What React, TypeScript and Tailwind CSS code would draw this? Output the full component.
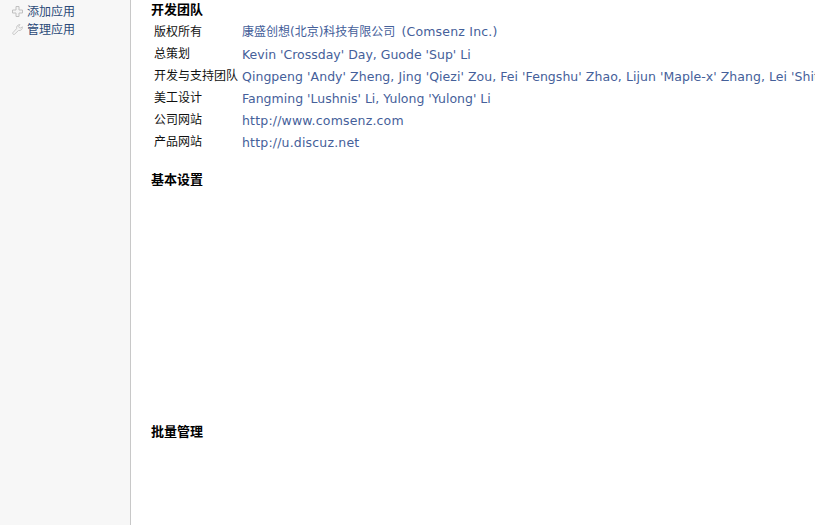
const cjk = "font-['Noto_Sans_CJK_SC',sans-serif]";
const latin = "font-['DejaVu_Sans','Noto_Sans_CJK_SC',sans-serif]";

const rows: { label: string; value: string; tracking?: string }[] = [
  { label: "总策划", value: "Kevin 'Crossday' Day, Guode 'Sup' Li" },
  {
    label: "开发与支持团队",
    value:
      "Qingpeng 'Andy' Zheng, Jing 'Qiezi' Zou, Fei 'Fengshu' Zhao, Lijun 'Maple-x' Zhang, Lei 'Shitou' Cao",
    tracking: "tracking-[0.05px]",
  },
  { label: "美工设计", value: "Fangming 'Lushnis' Li, Yulong 'Yulong' Li" },
  { label: "公司网站", value: "http://www.comsenz.com", tracking: "tracking-[0.18px]" },
  { label: "产品网站", value: "http://u.discuz.net", tracking: "tracking-[0.18px]" },
];

function PlusIcon() {
  return (
    <svg width="11" height="11" viewBox="0 0 11 11" className="shrink-0">
      <path
        d="M4 .5h3v3.5h3.5v3H7v3.5H4V7H.5V4H4z"
        fill="#f4f4f4"
        stroke="#c0c0c0"
        strokeWidth="1"
      />
    </svg>
  );
}

function WrenchIcon() {
  return (
    <svg width="11" height="11" viewBox="0 0 11 11" className="shrink-0">
      <path
        d="M.8 8.800 4.600 4.600C4.200 2.600 5.400.6 8 .6L6.600 2.200l.6 1.400 1.600.4L10.400 2.800c.3 2.400-1.600 4.200-3.900 3.700L2.400 10.400c-.8.500-2.200-.7-1.600-1.600z"
        fill="#f4f4f4"
        stroke="#c4c4c4"
        strokeWidth="0.9"
      />
    </svg>
  );
}

function SectionTitle({ children }: { children: string }) {
  return <h3 className={`${cjk} text-[13px] leading-[18px] font-bold text-black`}>{children}</h3>;
}

function Row({ label, children }: { label: string; children: React.ReactNode }) {
  return (
    <div className="flex h-[22px] items-center whitespace-nowrap">
      <span className={`${cjk} w-[91px] shrink-0 pb-[2px] pl-[3px] text-xs text-[#111111]`}>
        {label}
      </span>
      {children}
    </div>
  );
}

export default function App() {
  return (
    <div className="flex h-[525px] w-[815px] overflow-hidden bg-white">
      {/* Sidebar */}
      <aside className="w-[131px] shrink-0 border-r border-[#c8c8c8] bg-[#f7f7f7] pl-3 pt-[2px]">
        <ul className={`${cjk} text-xs text-[#2b4a78]`}>
          <li className="flex h-[18px] items-center gap-1">
            <PlusIcon />
            <span>添加应用</span>
          </li>
          <li className="flex h-[18px] items-center gap-1">
            <WrenchIcon />
            <span>管理应用</span>
          </li>
        </ul>
      </aside>

      {/* Main */}
      <main className="min-w-0 flex-1 overflow-hidden pl-5">
        <SectionTitle>开发团队</SectionTitle>
        <div className="pt-[3px]">
          <Row label="版权所有">
            <span className={`${latin} text-xs text-[#45609a]`}>
              康盛创想(北京)科技有限公司
              <span className="ml-[6px] text-[12.5px] tracking-[0.2px]">(Comsenz Inc.)</span>
            </span>
          </Row>
          {rows.map((row) => (
            <Row key={row.label} label={row.label}>
              <span className={`${latin} pt-[2px] text-[12.5px] text-[#45609a] ${row.tracking ?? ""}`}>
                {row.value}
              </span>
            </Row>
          ))}
        </div>
        <div className="mt-[17px]">
          <SectionTitle>基本设置</SectionTitle>
        </div>
        <div className="mt-[234px]">
          <SectionTitle>批量管理</SectionTitle>
        </div>
      </main>
    </div>
  );
}
